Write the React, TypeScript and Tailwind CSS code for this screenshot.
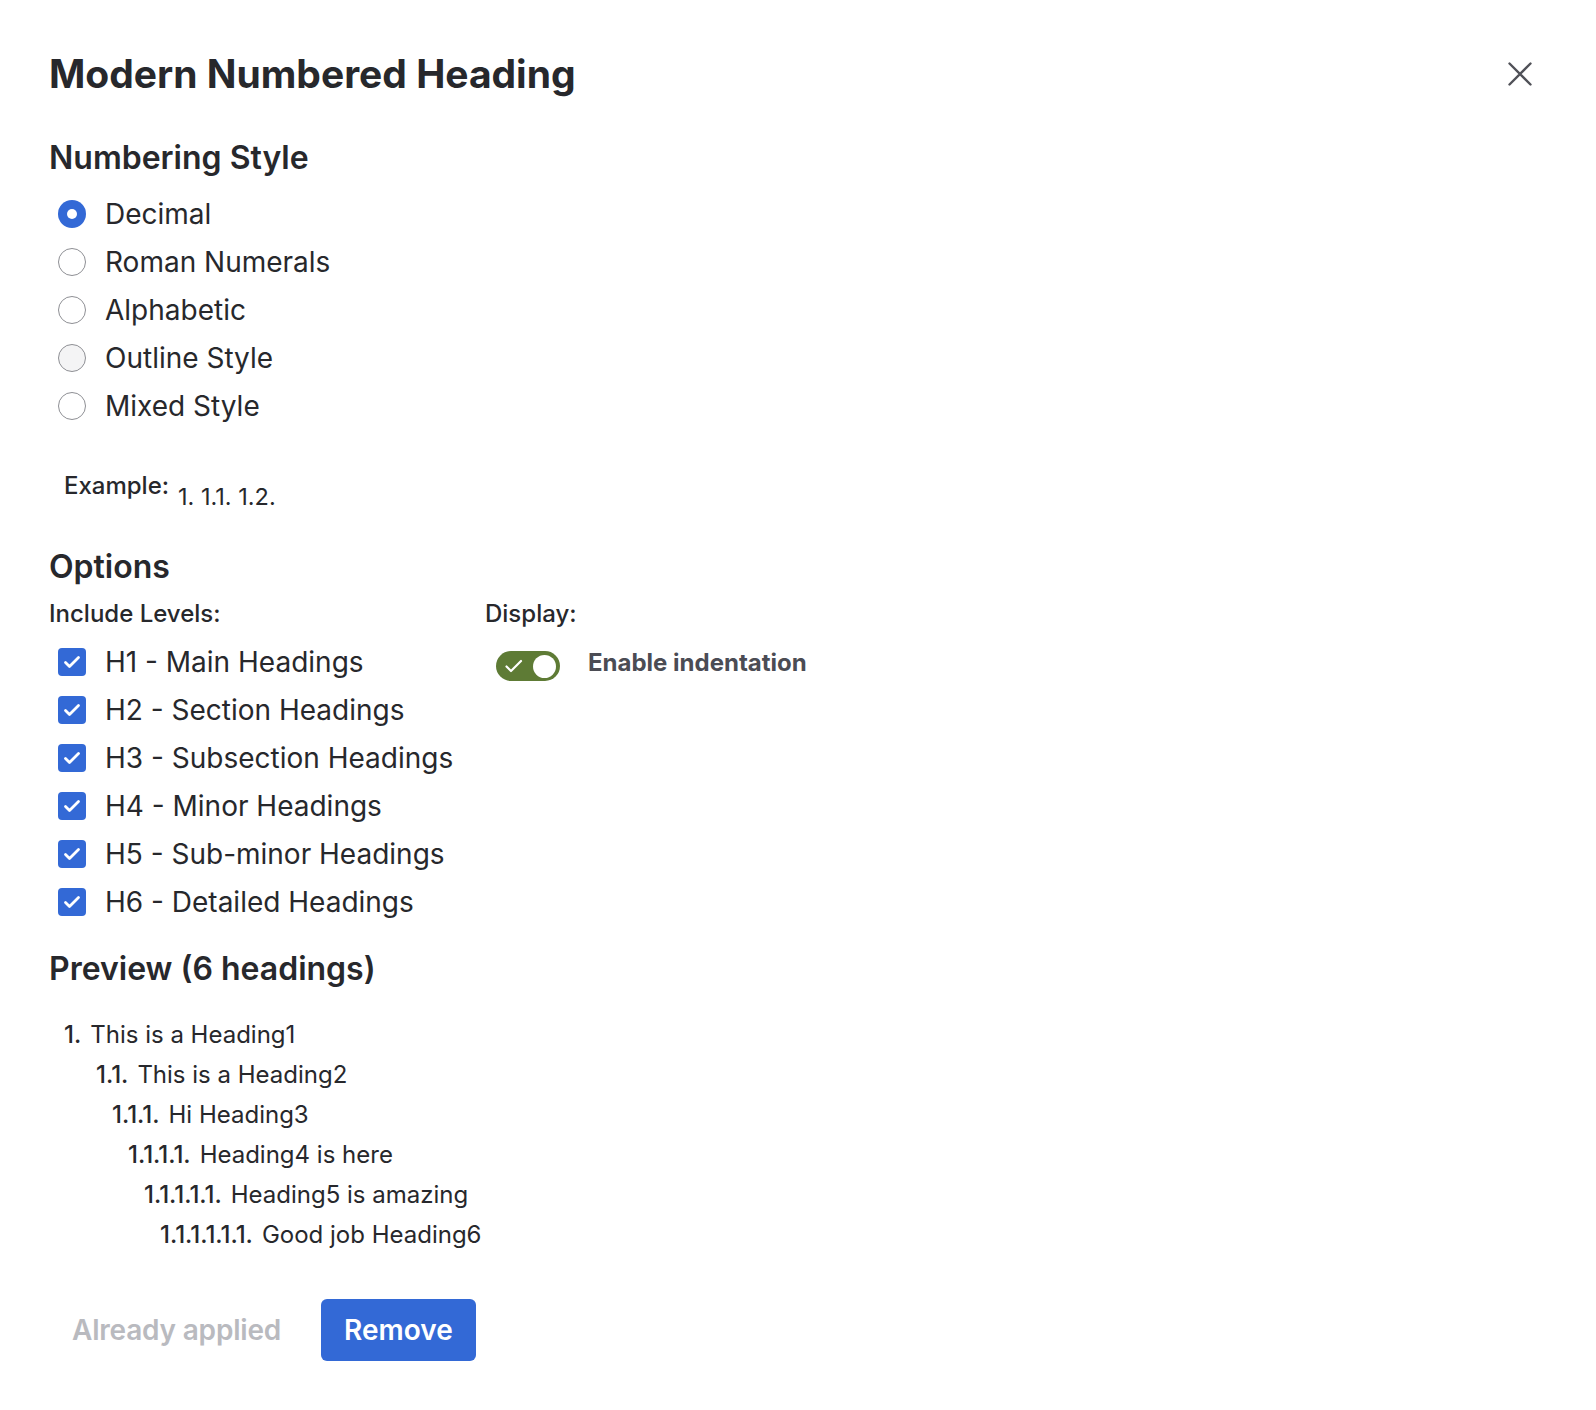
import { useState } from "react";

const styles = ["Decimal", "Roman Numerals", "Alphabetic", "Outline Style", "Mixed Style"];

const levels = [
  "H1 - Main Headings",
  "H2 - Section Headings",
  "H3 - Subsection Headings",
  "H4 - Minor Headings",
  "H5 - Sub-minor Headings",
  "H6 - Detailed Headings",
];

const preview = [
  { num: "1.", text: "This is a Heading1", indent: "pl-[15px]" },
  { num: "1.1.", text: "This is a Heading2", indent: "pl-[47px]" },
  { num: "1.1.1.", text: "Hi Heading3", indent: "pl-[63px]" },
  { num: "1.1.1.1.", text: "Heading4 is here", indent: "pl-[79px]" },
  { num: "1.1.1.1.1.", text: "Heading5 is amazing", indent: "pl-[95px]" },
  { num: "1.1.1.1.1.1.", text: "Good job Heading6", indent: "pl-[111px]" },
];

const Radio = ({ checked, hover }: { checked: boolean; hover?: boolean }) =>
  checked ? (
    <span className="flex h-[28px] w-[28px] items-center justify-center rounded-full bg-[#3369d6]">
      <span className="h-[10px] w-[10px] rounded-full bg-white" />
    </span>
  ) : (
    <span
      className={`h-[28px] w-[28px] rounded-full border-[1.5px] border-[#8e8f94] ${
        hover ? "bg-[#f4f4f5]" : "bg-white"
      }`}
    />
  );

const Checkbox = () => (
  <span className="flex h-[28px] w-[28px] items-center justify-center rounded-[4px] bg-[#3369d6]">
    <svg width="28" height="28" viewBox="0 0 28 28" fill="none">
      <path d="M7.5 14.5l4 4L20.5 9.5" stroke="white" strokeWidth="2.8" strokeLinecap="round" strokeLinejoin="round" />
    </svg>
  </span>
);

export default function App() {
  const [selected, setSelected] = useState(0);

  return (
    <div className="min-h-screen w-full bg-white font-['Inter',sans-serif] text-[#27282c]">
      <div className="px-[49px] pt-[50px] pb-[48px]">
        {/* header */}
        <div className="flex items-center justify-between">
          <h1 className="text-[39px] leading-[48px] font-bold">Modern Numbered Heading</h1>
          <button className="mr-[15px] flex h-[24px] w-[24px] items-center justify-center text-[#505158]">
            <svg width="24" height="24" viewBox="0 0 24 24" fill="none">
              <path d="M1.5 1.5l21 21M22.5 1.5l-21 21" stroke="currentColor" strokeWidth="2.4" strokeLinecap="round" />
            </svg>
          </button>
        </div>

        {/* numbering style */}
        <h2 className="mt-[40px] text-[32px] leading-[40px] font-semibold">Numbering Style</h2>
        <div className="mt-[12px] flex flex-col">
          {styles.map((s, i) => (
            <label
              key={s}
              onClick={() => setSelected(i)}
              className="flex h-[48px] cursor-pointer items-center gap-[19px] pl-[9px]"
            >
              <Radio checked={selected === i} hover={i === 3} />
              <span className="text-[28px] leading-[36px]">{s}</span>
            </label>
          ))}
        </div>

        <div className="mt-[41px] flex items-start gap-[9px] pl-[15px]">
          <span className="text-[24px] leading-[30px] font-medium">Example:</span>
          <span className="pt-[11px] text-[23.5px] leading-[30px]">1. 1.1. 1.2.</span>
        </div>

        {/* options */}
        <h2 className="mt-[35px] text-[32px] leading-[40px] font-semibold">Options</h2>
        <div className="mt-[11px] flex">
          <div className="w-[436px]">
            <div className="text-[24px] leading-[32px] font-medium">Include Levels:</div>
            <div className="mt-[8px] flex flex-col">
              {levels.map((l) => (
                <div key={l} className="flex h-[48px] items-center gap-[19px] pl-[9px]">
                  <Checkbox />
                  <span className="text-[28px] leading-[36px]">{l}</span>
                </div>
              ))}
            </div>
          </div>
          <div>
            <div className="text-[24px] leading-[32px] font-medium">Display:</div>
            <div className="mt-[14px] flex items-center gap-[28px] pl-[11px]">
              <span className="relative mt-[7px] flex h-[30px] w-[64px] items-center rounded-full bg-[#5e7b35]">
                <svg className="ml-[8px]" width="20" height="20" viewBox="0 0 20 20" fill="none">
                  <path d="M2.5 10.5l4.5 4.5L17 5" stroke="white" strokeWidth="2.2" strokeLinecap="round" strokeLinejoin="round" />
                </svg>
                <span className="absolute right-[4px] top-[3.5px] h-[23px] w-[23px] rounded-full bg-white" />
              </span>
              <span className="text-[24px] leading-[32px] font-bold text-[#4b4c54]">Enable indentation</span>
            </div>
          </div>
        </div>

        {/* preview */}
        <h2 className="mt-[23px] text-[32px] leading-[40px] font-semibold">Preview (6 headings)</h2>
        <div className="mt-[26px] flex flex-col">
          {preview.map((p) => (
            <div key={p.num} className={`flex h-[40px] items-center gap-[9px] text-[24px] ${p.indent}`}>
              <span className="font-medium">{p.num}</span>
              <span>{p.text}</span>
            </div>
          ))}
        </div>

        {/* actions */}
        <div className="mt-[44px] flex items-center gap-[17px]">
          <button className="h-[62px] px-[23px] text-[28px] font-semibold tracking-[-0.2px] text-[#b9babf]">
            Already applied
          </button>
          <button className="h-[62px] rounded-[6px] bg-[#3369d6] px-[23px] text-[28px] font-semibold text-white">
            Remove
          </button>
        </div>
      </div>
    </div>
  );
}
